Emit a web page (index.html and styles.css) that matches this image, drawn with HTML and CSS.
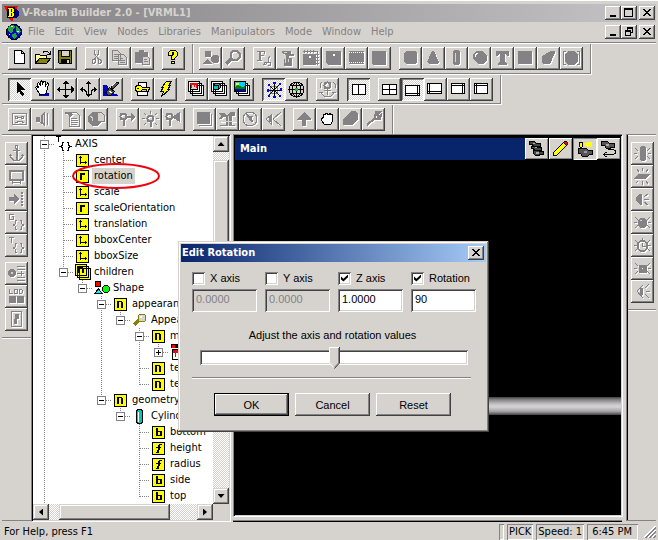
FILE: index.html
```html
<!DOCTYPE html>
<html lang="en">
<head>
<meta charset="utf-8">
<title>V-Realm Builder 2.0 - [VRML1]</title>
<link rel="stylesheet" href="styles.css">
</head>
<body>
<svg class="defs" width="0" height="0" aria-hidden="true">
  <symbol id="vec" viewBox="0 0 13 13"><path fill="#ff0" stroke="#000" d="M.5.5h12v12h-12z"/><path fill="#000" d="M4 2h1v8H4zM3 3h3v1H3zM4 8h7v1H4zM9 7h1v3H9z"/></symbol>
  <symbol id="rot" viewBox="0 0 13 13"><path fill="#ff0" stroke="#000" d="M.5.5h12v12h-12z"/><path fill="#000" d="M4 3h2v7H4zM6 3h3v2H6z"/></symbol>
  <symbol id="node" viewBox="0 0 13 13"><path fill="#ff0" stroke="#000" d="M.5.5h12v12h-12z"/><path fill="#000" d="M3 3h2v7H3zM5 3h3v1H5zM7 4h2v6H7z"/></symbol>
  <symbol id="bool" viewBox="0 0 13 13"><path fill="#ff0" stroke="#000" d="M.5.5h12v12h-12z"/><path fill="#000" fill-rule="evenodd" d="M4 2h2v3h3l1 1v3l-1 1H4zM6 6v3h2V6z"/></symbol>
  <symbol id="flt" viewBox="0 0 13 13"><path fill="#ff0" stroke="#000" d="M.5.5h12v12h-12z"/><path fill="#000" d="M7 2h3v1H8v2h1v1H8l-1 5H4v-1h1l1-4H4V5h2V3h1z"/></symbol>
  <symbol id="braces" viewBox="0 0 23 23"><path fill="none" stroke="currentColor" d="M12 9.500h-1.500v3l-2 1.500 2 1.500v3H12M15 9.500h1.500v3l2 1.500-2 1.500v3H15"/></symbol>
  <symbol id="rays" viewBox="0 0 23 23"><path fill="none" stroke="currentColor" d="M4 6l3 3M3 11.500h3M4 17l3-3M19 6l-3 3M20 11.500h-3M19 17l-3-3"/></symbol>
  <symbol id="cam" viewBox="0 0 23 23"><path fill="#555" stroke="#000" d="M5.500 8.500h8l2 2h4v4h-3l-2 2h-5l-2-3h-2z"/><path fill="#999" d="M11 11h3v2h-3z"/></symbol>
  <symbol id="min" viewBox="0 0 12 10"><path fill="#000" d="M3 7h6v2H3z"/></symbol>
  <symbol id="close" viewBox="0 0 12 10"><path fill="#000" d="M2 1h2v1h1v1h2V2h1V1h2v1H9v1H8v1H7v1h1v1h1v1h1v1H8V7H7V6H5v1H4v1H2V7h1V6h1V5h1V4H4V3H3V2H2z"/></symbol>
</svg>

<header class="titlebar">
  <svg class="app-icon" viewBox="0 0 16 15"><path fill="#f00" d="M0 0h14L7 13z"/><circle cx="11" cy="7.500" r="4.500" fill="#000084"/><path fill="#f00" d="M5 12h4v3H7z"/><path fill="#000" d="M3 1h8v10l-2 1H3z"/><path fill="#ff0" d="M4 2h5v1H4zM5 3h2v7H5zM8 3h2v3H8zM7 6h2v1H7zM8 7h2v3H8zM4 10h5v1H4z"/></svg>
  <h1>V-Realm Builder 2.0 - [VRML1]</h1>
  <div class="controls">
    <button class="ctl" aria-label="Minimize"><svg><use href="#min"/></svg></button><button class="ctl" aria-label="Maximize"><svg viewBox="0 0 12 10"><path fill="none" stroke="#000" d="M1.500 1.500h8v7h-8zM1 .5h9"/></svg></button><button class="ctl last" aria-label="Close"><svg><use href="#close"/></svg></button>
  </div>
</header>

<nav class="menubar">
  <svg class="globe" viewBox="0 0 16 16"><circle cx="8" cy="8" r="7.500" fill="#0000c8" stroke="#000"/><path fill="#21a642" d="M3 2l4-1 2 2-2 2v2L5 9 2 7V4zM10 2l3 2 2 4-3 2-2-3zM6 10l4-1 1 3-3 3-2-2z"/><path fill="#fff" d="M5 2h2v1H5zM11 7h2v1h-2zM3 10h1v1H3z"/></svg>
  <div class="menus"><button>File</button><button>Edit</button><button>View</button><button>Nodes</button><button>Libraries</button><button>Manipulators</button><button>Mode</button><button>Window</button><button>Help</button></div>
  <div class="controls">
    <button class="ctl" aria-label="Minimize document"><svg><use href="#min"/></svg></button><button class="ctl" aria-label="Restore document"><svg viewBox="0 0 12 10"><path fill="none" stroke="#000" d="M4 .5h6M4.500 3V1.500h5v4H8M2 3.500h6M2.500 4.500h5v4h-5z"/></svg></button><button class="ctl last" aria-label="Close document"><svg><use href="#close"/></svg></button>
  </div>
</nav>

<section class="toolbars">
  <div class="row first">
    <div class="band">
      <div class="group">
        <button class="tb" aria-label="New"><svg viewBox="0 0 23 23"><path fill="#fff" stroke="#000" d="M6.500 3.500h7l3 3v10h-10zM13.500 3.500v3h3"/></svg></button>
        <button class="tb" aria-label="Open"><svg viewBox="0 0 23 23"><path fill="#ffff9c" stroke="#000" d="M4.500 16.500v-9h4l1 1h6v3h-6z"/><path fill="#848200" stroke="#000" d="M4.500 16.500l4-5h11l-4 5z"/><path fill="none" stroke="#000" d="M12 5.500l2-1.500h2l3 3M19.500 3.500v4h-4"/></svg></button>
        <button class="tb" aria-label="Save"><svg viewBox="0 0 23 23"><path fill="#848200" stroke="#000" d="M4.500 3.500h13v13h-12l-1-1z"/><path fill="#d6d3ce" stroke="#000" d="M7.500 3.500h8v6h-8z"/><path d="M7 12h9v5H7z"/><path fill="#d6d3ce" d="M13 13h2v3h-2z"/></svg></button>
      </div>
      <div class="group">
        <button class="tb off" aria-label="Cut"><svg viewBox="0 0 23 23"><path fill="none" stroke="currentColor" d="M9.500 3v4l4 5M13.500 3v4l-4 5M8 12.500h2v3l-1 1H8l-1-1v-2zM13 12.500h2l1 1v2l-1 1h-2z"/></svg></button>
        <button class="tb off" aria-label="Copy"><svg viewBox="0 0 23 23"><path fill="#d6d3ce" stroke="currentColor" d="M4.500 3.500h5l3 3v7h-8zM6 7.500h4M6 9.500h5M6 11.500h4M10.500 7.500h5l3 3v7h-8zM12 11.500h3M12 13.500h5M12 15.500h5"/></svg></button>
        <button class="tb off" aria-label="Paste"><svg viewBox="0 0 23 23"><path fill="currentColor" d="M4 5h4V3h5v2h4v11H4z"/><path fill="#d6d3ce" stroke="currentColor" d="M11.500 9.500h5l2 2v6h-7zM13 12.500h3M13 14.500h4"/></svg></button>
      </div>
      <div class="group">
        <button class="tb" aria-label="Help"><svg viewBox="0 0 23 23"><path fill="#ff0" stroke="#000" d="M6.500 8.500v-3l2-2h5l2 2v3l-3 3v1h-3v-3l2-2v-2h-1v3zM9.500 14.500h3v2h-3z"/></svg></button>
      </div>
    </div>
    <div class="band">
      <div class="group">
        <button class="tb off" aria-label="Objects"><svg viewBox="0 0 23 23"><path fill="currentColor" d="M6 4h6v6H6zM14 8h4l2 2v4l-2 2h-4l-2-2v-4zM8 12l5 5H3z"/></svg></button>
        <button class="tb off" aria-label="Find"><svg viewBox="0 0 23 23"><path fill="none" stroke="currentColor" stroke-width="2" d="M11 4h4l3 3v3l-3 3h-4l-2-2V6z"/><path stroke="currentColor" stroke-width="3" d="M9 12l-5 5"/></svg></button>
      </div>
      <div class="group">
        <button class="tb off" aria-label="Font style"><svg viewBox="0 0 23 23"><path fill="currentColor" d="M4 4h8v3h-1V5H8v3h3v1H8v4h1v1H4v-1h2V5H4z"/><path fill="none" stroke="currentColor" d="M17 9l-2 3v3l-2 2h-2l1-2h5v3h-2"/></svg></button>
        <button class="tb off" aria-label="Material"><svg viewBox="0 0 23 23"><path fill="currentColor" d="M6 4h9v3h3v2h-5v2h3v8H8v-7h2V8L6 6z"/><path fill="#d6d3ce" d="M9 12h1v4H9zM12 12h1v3h-1zM8 5h3v1H8z"/></svg></button>
        <button class="tb off" aria-label="Texture grid"><svg viewBox="0 0 23 23"><path fill="currentColor" d="M4 7h13v11H4z"/><path stroke="currentColor" d="M4 4.500h15M18.500 4v14M5.500 3v3M8.500 3v3M11.500 3v3M14.500 3v3M17 7.500h3M17 10.500h3M17 13.500h3M17 16.500h3"/><path fill="#fff" d="M10 9h2v2h-2z"/></svg></button>
        <button class="tb off" aria-label="Image texture"><svg viewBox="0 0 23 23"><path fill="currentColor" d="M4 4h15v14H6l-2-2z"/><path fill="#fff" d="M11 7h2v2h-2z"/></svg></button>
        <button class="tb off" aria-label="Movie texture"><svg viewBox="0 0 23 23"><path fill="currentColor" d="M4 4h15v13H4z"/><path stroke="#fff" stroke-dasharray="1 1" d="M4 5.500h15M4 15.500h15"/></svg></button>
        <button class="tb off" aria-label="Pixel texture"><svg viewBox="0 0 23 23"><path fill="currentColor" d="M4 4h14v14H5l-1-1z"/></svg></button>
      </div>
      <div class="group">
        <button class="tb off" aria-label="Box"><svg viewBox="0 0 23 23"><path fill="currentColor" d="M7 4h9l2 2v9l-2 2H7l-2-2V6z"/></svg></button>
        <button class="tb off" aria-label="Cone"><svg viewBox="0 0 23 23"><path fill="currentColor" d="M10 4h2l5 11-2 2H8l-3-2z"/></svg></button>
        <button class="tb off" aria-label="Cylinder"><svg viewBox="0 0 23 23"><path fill="currentColor" d="M9 3h4l2 2v11l-2 2H9l-1-2V5z"/><path fill="#d6d3ce" d="M10 6h1v9h-1z"/></svg></button>
        <button class="tb off" aria-label="Sphere"><svg viewBox="0 0 23 23"><path fill="currentColor" d="M9 4h6l4 5v4l-4 4h-4l-6-5V7z"/><path fill="none" stroke="#fff" d="M7 10V8l3-2"/></svg></button>
        <button class="tb off" aria-label="Text"><svg viewBox="0 0 23 23"><path fill="currentColor" d="M5 4h13v5h-2l-1-2h-1v8l2 1v2H7v-2l2-1V7H8L7 9H5z"/></svg></button>
        <button class="tb off" aria-label="Elevation grid"><svg viewBox="0 0 23 23"><path fill="currentColor" d="M4 4h14v13H4z"/></svg></button>
        <button class="tb off" aria-label="Extrusion"><svg viewBox="0 0 23 23"><path fill="currentColor" d="M5 9l9-5h4v2l-5 11H6l-1-1z"/></svg></button>
        <button class="tb off" aria-label="Face set"><svg viewBox="0 0 23 23"><path fill="currentColor" d="M8 4h7l3 4v6l-3 4H8l-3-4V8z"/><path fill="none" stroke="currentColor" d="M6 4.500H3.500v13H6M17 4.500h2.500v13H17"/></svg></button>
      </div>
    </div>
  </div>

  <div class="row second">
    <div class="band">
      <div class="group">
        <button class="tb down" aria-label="Select"><svg viewBox="0 0 23 23"><path d="M9 4l8 8h-4l3 4-2 2-3-5-2 2z"/></svg></button>
        <button class="tb" aria-label="Hand"><svg viewBox="0 0 23 23"><path fill="#0000c8" d="M8 15h10v3H8z"/><path fill="#fff" stroke="#000" d="M4.500 9.500l1-1 2 1-1-4 1-1 2 3V4l1-1 1 1v3l1-4h2v5l2-3 1 1-1 5-2 5h-6z"/></svg></button>
        <button class="tb" aria-label="Move"><svg viewBox="0 0 23 23"><path fill="none" stroke="#000" d="M11.500 4v15M4 11.500h15"/><path d="M11 3h1l3 3H8zM11 20h1l3-3H8zM3 11v1l3 3V8zM20 11v1l-3 3V8z"/></svg></button>
        <button class="tb" aria-label="Orbit"><svg viewBox="0 0 23 23"><path fill="none" stroke="#000" d="M11.500 4v14M4 11.500h3l2 2v3M19 11.500h-3l-2 2v3"/><path d="M11 3h1l2 3H9zM11 19h1l2-3H9zM3 11v1l3 2V9zM20 11v1l-3 2V9z"/></svg></button>
        <button class="tb" aria-label="Paint"><svg viewBox="0 0 23 23"><path fill="#0000c8" d="M3 7h4l3 7 8 3v1H3z"/><path fill="#555" stroke="#000" d="M9.500 9.500l5 4-4 4H8l-2-3zM11 9l5-5h2v2l-5 5z"/><path stroke="#fff" d="M9 13l3 2M12 8l4-4"/></svg></button>
      </div>
      <div class="group">
        <button class="tb" aria-label="Key"><svg viewBox="0 0 23 23"><path fill="#fff" stroke="#000" d="M7.500 8.500v-4h8v4M6.500 13.500h10v4h-10z"/><path fill="#ff0" stroke="#000" d="M4.500 8.500l2-1h3l2 2h7v2h-1v2h-2v-2h-4l-2 2h-3l-2-1z"/><path d="M6 10h2v1H6z"/></svg></button>
        <button class="tb" aria-label="Run"><svg viewBox="0 0 23 23"><path fill="#ff0" stroke="#000" d="M12.500 3.500h5l-3 4h2l-3 4h2l-8 7 2-5h-3l3-4h-2z"/></svg></button>
      </div>
      <div class="group">
        <button class="tb" aria-label="Material library"><svg viewBox="0 0 23 23"><path fill="#fff" stroke="#000" d="M7.500 7.500h11v10h-11zM5.500 5.500h11v10h-11zM3.500 3.500h11v10h-11z"/><path fill="#d6d3ce" stroke="#000" d="M5.500 5.500h7v6h-7z"/><path fill="#f00" d="M5 5h8v2H5zM6 7h1v3H6zM9 7h1v2H9zM11 7h1v3h-1z"/></svg></button>
        <button class="tb" aria-label="Object library"><svg viewBox="0 0 23 23"><path fill="#fff" stroke="#000" d="M7.500 7.500h11v10h-11zM5.500 5.500h11v10h-11zM3.500 3.500h11v10h-11z"/><path fill="#00c3c6" stroke="#000" d="M5.500 7.500l2-2h5v4l-2 2h-5zM5.500 7.500h5v4M10.500 7.500l2-2"/></svg></button>
        <button class="tb" aria-label="Image library"><svg viewBox="0 0 23 23"><path fill="#fff" stroke="#000" d="M7.500 7.500h11v10h-11zM5.500 5.500h11v10h-11z"/><path fill="#00cfff" stroke="#000" d="M3.500 3.500h11v10h-11z"/><path fill="#008200" d="M4 9l3-2 4 2 3-1v4H4z"/><path fill="#0000c8" d="M4 11h10v2H4z"/><path fill="#ff0" d="M5 5h3v2H5z"/></svg></button>
      </div>
      <div class="group">
        <button class="tb down" aria-label="Axes"><svg viewBox="0 0 23 23"><circle cx="12" cy="12" r="4" fill="none" stroke="#848284"/><path stroke="#000" d="M6 6l12 12M18 6L6 18M12.500 5v14M5 12.500h14"/><path fill="#00f" d="M11 4h3v2h-3zM11 18h3v2h-3zM5 11h2v3H5zM18 10h2v3h-2zM6 6h2v2H6zM17 5h2v2h-2zM6 17h2v2H6zM17 17h2v2h-2z"/></svg></button>
        <button class="tb" aria-label="Globe"><svg viewBox="0 0 23 23"><circle cx="11.500" cy="11.500" r="7.500" fill="none" stroke="#000"/><ellipse cx="11.500" cy="11.500" rx="4" ry="7.500" fill="none" stroke="#000"/><path stroke="#000" d="M4 11.500h15M11.500 4v15M6 7.500h11M6 15.500h11"/><path fill="#0c0" d="M10 10h3v3h-3z"/></svg></button>
      </div>
      <div class="group">
        <button class="tb off" aria-label="Anchor rotate"><svg viewBox="0 0 23 23"><circle cx="11.500" cy="7.500" r="3" fill="none" stroke="currentColor" stroke-width="2"/><path fill="none" stroke="currentColor" d="M11.500 11v6M8 12.500h7M5 15l3 3h7l3-3M6 4l-2 2v4M17 4l2 2v4M3 14.500h4M16 14.500h4"/></svg></button>
      </div>
      <div class="group">
        <button class="tb down" aria-label="Split panes"><svg viewBox="0 0 23 23"><path fill="#fff" stroke="#000" d="M5.500 6.500h13v10h-13zM11.500 6.500v10"/></svg></button>
      </div>
      <div class="group">
        <button class="tb" aria-label="Four views"><svg viewBox="0 0 23 23"><path fill="#fff" stroke="#000" d="M4.500 6.500h14v10h-14zM11.500 6.500v10M4 11.500h15"/></svg></button>
        <button class="tb down" aria-label="Right and bottom view"><svg viewBox="0 0 23 23"><path fill="#fff" stroke="#000" d="M4.500 7.500h14v10h-14zM16.500 7.500v10M4 15.500h15"/></svg></button>
        <button class="tb" aria-label="Left and bottom view"><svg viewBox="0 0 23 23"><path fill="#fff" stroke="#000" d="M3.500 5.500h14v10h-14zM5.500 5.500v10M3 13.500h15"/></svg></button>
        <button class="tb" aria-label="Right and top view"><svg viewBox="0 0 23 23"><path fill="#fff" stroke="#000" d="M4.500 5.500h13v10h-13zM15.500 5.500v10M4 7.500h14"/></svg></button>
        <button class="tb" aria-label="Left and top view"><svg viewBox="0 0 23 23"><path fill="#fff" stroke="#000" d="M4.500 5.500h13v10h-13zM6.500 5.500v10M4 7.500h14"/></svg></button>
      </div>
    </div>
  </div>

  <div class="row third">
    <div class="band">
      <div class="group">
        <button class="tb off" aria-label="Audio clip"><svg viewBox="0 0 23 23"><path fill="none" stroke="currentColor" d="M4.500 5.500h14v11h-14z"/><path fill="none" stroke="currentColor" d="M7.500 8.500h2v2h-2zM13.500 8.500h2v2h-2zM9 9.500h5M7 14.500h2v-1h5v1h2"/></svg></button>
        <button class="tb off" aria-label="Sound"><svg viewBox="0 0 23 23"><path fill="currentColor" d="M5 9h3l6-5v14l-6-4H5z"/><path fill="none" stroke="#d6d3ce" d="M9.500 8v6M12.500 7v8"/><path fill="none" stroke="currentColor" d="M16.500 5v12"/></svg></button>
      </div>
      <div class="group">
        <button class="tb off" aria-label="Script"><svg viewBox="0 0 23 23"><path fill="none" stroke="currentColor" d="M7.500 8v10.500h10v-11l-3-3h-6M9 10.500h6M9 12.500h7M9 14.500h7M9 16.500h6"/><path fill="currentColor" d="M3 4h7l1 3-3 2-2-3H3z"/></svg></button>
        <button class="tb off" aria-label="Inline world"><svg viewBox="0 0 23 23"><circle cx="10" cy="11" r="7" fill="currentColor"/><path stroke="#d6d3ce" fill="none" d="M5 8l3 2-1 3"/><path fill="#d6d3ce" stroke="currentColor" d="M12.500 4.500h4l3 3v6h-7z"/></svg></button>
      </div>
      <div class="group">
        <button class="tb off" aria-label="Directional light"><svg viewBox="0 0 23 23"><circle cx="7.500" cy="8.500" r="3" fill="none" stroke="currentColor" stroke-width="2"/><path fill="currentColor" d="M7 12h2v6H7zM11 8h4V5l4 4-4 4v-3h-4z"/></svg></button>
        <button class="tb off" aria-label="Point light"><svg viewBox="0 0 23 23"><circle cx="11.500" cy="10.500" r="3" fill="none" stroke="currentColor" stroke-width="2"/><path fill="currentColor" d="M11 14h2v5h-2z"/><path stroke="currentColor" d="M11.500 3v3M5 5l2 2M18 5l-2 2M3 10.500h3M17 10.500h3M5 17l2-2M18 17l-2-2"/></svg></button>
        <button class="tb off" aria-label="Spot light"><svg viewBox="0 0 23 23"><circle cx="7.500" cy="8.500" r="3" fill="none" stroke="currentColor" stroke-width="2"/><path fill="currentColor" d="M7 12h2v6H7zM11 8l7-4v10l-7-4z"/></svg></button>
      </div>
      <div class="group">
        <button class="tb off" aria-label="Background"><svg viewBox="0 0 23 23"><path fill="currentColor" d="M4 4h13v12H4z"/><path fill="none" stroke="currentColor" d="M18.500 6v11.500H6"/></svg></button>
        <button class="tb off" aria-label="Fog"><svg viewBox="0 0 23 23"><path fill="currentColor" d="M3 5h5l3 2 4-3h4v4h-3v9h3v1H4v-1h6V9H8l-3 2H3l2-3z"/><path stroke="#d6d3ce" d="M4 13.500h16M12.500 8v10"/></svg></button>
        <button class="tb off" aria-label="Time sensor"><svg viewBox="0 0 23 23"><circle cx="11" cy="11" r="7" fill="none" stroke="currentColor"/><path fill="none" stroke="currentColor" stroke-width="2" d="M8 6l3 5 3 3M11 11l2-3"/></svg></button>
        <button class="tb off" aria-label="Visibility"><svg viewBox="0 0 23 23"><path fill="none" stroke="currentColor" d="M19 4l-8 7 8 7M4 11l5-4v9z"/><path fill="currentColor" d="M7 8h3v6H7z"/></svg></button>
      </div>
      <div class="group">
        <button class="tb off" aria-label="Up"><svg viewBox="0 0 23 23"><path fill="currentColor" d="M11 4l7 7v1h-5v6H9v-6H4v-1z"/></svg></button>
        <button class="tb" aria-label="Grab"><svg viewBox="0 0 23 23"><path fill="#fff" stroke="#000" d="M5.500 10.500l2-1v-3h2v-1h2v1h2v-1h1v1h2v7l-2 3h-6l-3-4z"/></svg></button>
        <button class="tb off" aria-label="Touch"><svg viewBox="0 0 23 23"><path fill="currentColor" d="M12 3h5l2 3v6l-6 5H4v-6z"/></svg></button>
        <button class="tb off" aria-label="Settings"><svg viewBox="0 0 23 23"><path fill="none" stroke="currentColor" stroke-width="2" d="M5 17l8-7M14 4l-1 5 1 2h4l1-4-3 2-1-2 3-3z"/></svg></button>
      </div>
    </div>
  </div>
</section>

<main class="work">
  <aside class="dock left">
    <div class="group">
      <button class="tb off" aria-label="Anchor"><svg viewBox="0 0 23 23"><path fill="none" stroke="currentColor" d="M10.500 3.500h2v3h-2zM8 8.500h7M5.500 12v3l3 3h6l3-3v-3M4 13.500h3M16 13.500h3"/><path fill="currentColor" d="M11 7h2v11h-2z"/></svg></button>
      <button class="tb off" aria-label="Billboard"><svg viewBox="0 0 23 23"><path fill="none" stroke="currentColor" stroke-width="2" d="M5 6h13v9H5z"/><path stroke="currentColor" d="M7.500 15v4M15.500 15v4M7 17.500h9"/></svg></button>
      <button class="tb off" aria-label="Collision"><svg viewBox="0 0 23 23"><path fill="currentColor" d="M4 9h5V6l5 5-5 5v-3H4z"/><path stroke="currentColor" stroke-width="2" stroke-dasharray="2 1" d="M17 4v14"/></svg></button>
      <button class="tb off" aria-label="Group"><svg viewBox="0 0 23 23"><path fill="none" stroke="currentColor" d="M9 3.500H5l-.5 1v4l.5 0h3.500v-3H7"/><use href="#braces"/></svg></button>
      <button class="tb off" aria-label="Transform"><svg viewBox="0 0 23 23"><path fill="none" stroke="currentColor" d="M4 3.500h5M6.500 3v6"/><use href="#braces"/></svg></button>
    </div>
    <div class="group">
      <button class="tb off" aria-label="Switch"><svg viewBox="0 0 23 23"><circle cx="7" cy="11" r="4" fill="currentColor"/><path stroke="currentColor" d="M12 4.500h8M12 7.500h8M12 11.500h7M12 15.500h8M12 18.500h8M16.500 9v5"/><path fill="#d6d3ce" d="M6 10h2v2H6z"/></svg></button>
      <button class="tb off" aria-label="LOD"><svg viewBox="0 0 23 23"><path fill="none" stroke="currentColor" d="M4.500 4v4.500h3M9.500 4.500h3v4h-3zM14.500 4.500h2l1 1v2l-1 1h-2z"/><path fill="currentColor" d="M4 11h7v7H4zM12 11h7v7h-7z"/></svg></button>
      <button class="tb off" aria-label="Proto"><svg viewBox="0 0 23 23"><path fill="none" stroke="currentColor" d="M6.500 3.500h10v15h-10z"/><path fill="currentColor" d="M10 6h4v5h-4zM9 11h3v5H9z"/></svg></button>
    </div>
  </aside>

  <section class="treepane">
    <div class="treeview">
      <ul class="tree">
        <li><div class="item"><span class="tw"><i class="minus"></i></span><span class="ic"><svg width="16" height="16" viewBox="0 0 16 16"><path fill="none" stroke="#000" d="M0 .5h5M2.500 0v6M8 6.500H6.500v3l-2 1 2 1v3H8M11 6.500h1.500v3l2 1-2 1v3H11"/></svg></span><span class="tx">AXIS</span></div>
          <ul>
            <li><div class="item"><span class="tw"></span><span class="ic"><svg><use href="#vec"/></svg></span><span class="tx">center</span></div></li>
            <li><div class="item"><span class="tw"></span><span class="ic"><svg><use href="#rot"/></svg></span><span class="tx sel">rotation</span><svg class="ring" viewBox="0 0 90 28"><ellipse cx="45" cy="14" rx="43" ry="12" fill="none" stroke="#f00010" stroke-width="2"/></svg></div></li>
            <li><div class="item"><span class="tw"></span><span class="ic"><svg><use href="#vec"/></svg></span><span class="tx">scale</span></div></li>
            <li><div class="item"><span class="tw"></span><span class="ic"><svg><use href="#rot"/></svg></span><span class="tx">scaleOrientation</span></div></li>
            <li><div class="item"><span class="tw"></span><span class="ic"><svg><use href="#vec"/></svg></span><span class="tx">translation</span></div></li>
            <li><div class="item"><span class="tw"></span><span class="ic"><svg><use href="#vec"/></svg></span><span class="tx">bboxCenter</span></div></li>
            <li><div class="item"><span class="tw"></span><span class="ic"><svg><use href="#vec"/></svg></span><span class="tx">bboxSize</span></div></li>
            <li><div class="item"><span class="tw"><i class="minus"></i></span><span class="ic"><svg width="16" height="16" viewBox="0 0 16 16"><path fill="#ff0" stroke="#000" d="M4.500 4.500h11v11h-11zM2.500 2.500h11v11h-11zM.5.5h11v11H.5z"/><path d="M3 3h2v6H3zM5 3h3v1H5zM7 4h2v5H7z"/></svg></span><span class="tx">children</span></div>
              <ul>
                <li><div class="item"><span class="tw"><i class="minus"></i></span><span class="ic"><svg width="16" height="14" viewBox="0 0 16 14"><path fill="#f00" stroke="#000" d="M1.500.5h5v5h-5z"/><path fill="#0ff" stroke="#000" d="M4.500 8l4 4.500h-8z"/><circle cx="12" cy="8" r="3.500" fill="#0f0" stroke="#000"/></svg></span><span class="tx">Shape</span></div>
                  <ul>
                    <li><div class="item"><span class="tw"><i class="minus"></i></span><span class="ic"><svg><use href="#node"/></svg></span><span class="tx">appearance</span></div>
                      <ul>
                        <li><div class="item"><span class="tw"><i class="minus"></i></span><span class="ic"><svg width="14" height="14" viewBox="0 0 14 14"><path stroke="#848200" stroke-width="3" d="M6 7l-5 5"/><circle cx="9" cy="5" r="4" fill="#d6d3ce" stroke="#848200"/><path fill="#fff" d="M7 3h2v2H7z"/></svg></span><span class="tx">Appearance</span></div>
                          <ul>
                            <li><div class="item"><span class="tw"><i class="minus"></i></span><span class="ic"><svg><use href="#node"/></svg></span><span class="tx">mat</span></div>
                              <ul>
                                <li><div class="item"><span class="tw"><i class="plus"></i></span><span class="ic"><svg width="14" height="16" viewBox="0 0 14 16"><path d="M0 0h14v4H0z"/><path fill="#f00" d="M1 1h3v3H1z"/><path fill="#fff" stroke="#000" d="M1.500 5.500h11v10h-11z"/><path fill="#f00" d="M2 6h10v3H2zM4 9h1v4H4zM7 9h1v4H7z"/></svg></span></div></li>
                              </ul>
                            </li>
                            <li><div class="item"><span class="tw"></span><span class="ic"><svg><use href="#node"/></svg></span><span class="tx">tex</span></div></li>
                            <li><div class="item"><span class="tw"></span><span class="ic"><svg><use href="#node"/></svg></span><span class="tx">tex</span></div></li>
                          </ul>
                        </li>
                      </ul>
                    </li>
                    <li><div class="item"><span class="tw"><i class="minus"></i></span><span class="ic"><svg><use href="#node"/></svg></span><span class="tx">geometry</span></div>
                      <ul>
                        <li><div class="item"><span class="tw"><i class="minus"></i></span><span class="ic"><svg width="8" height="15" viewBox="0 0 8 15"><path fill="#00c3c6" stroke="#000" d="M2 .5h3l1.500 1.500v11L5 14.500H2L.5 13V2z"/><path fill="#fff" d="M2 3h1v10H2z"/></svg></span><span class="tx">Cylinder</span></div>
                          <ul>
                            <li><div class="item"><span class="tw"></span><span class="ic"><svg><use href="#bool"/></svg></span><span class="tx">bottom</span></div></li>
                            <li><div class="item"><span class="tw"></span><span class="ic"><svg><use href="#flt"/></svg></span><span class="tx">height</span></div></li>
                            <li><div class="item"><span class="tw"></span><span class="ic"><svg><use href="#flt"/></svg></span><span class="tx">radius</span></div></li>
                            <li><div class="item"><span class="tw"></span><span class="ic"><svg><use href="#bool"/></svg></span><span class="tx">side</span></div></li>
                            <li><div class="item"><span class="tw"></span><span class="ic"><svg><use href="#bool"/></svg></span><span class="tx">top</span></div></li>
                          </ul>
                        </li>
                      </ul>
                    </li>
                  </ul>
                </li>
              </ul>
            </li>
          </ul>
        </li>
        <li class="more"></li>
      </ul>
      <div class="vscroll"><button class="sb" aria-label="Scroll up"><i class="arr up"></i></button><div class="vthumb"></div><button class="sb bottom" aria-label="Scroll down"><i class="arr dn"></i></button></div>
    </div>
    <div class="hscroll"><button class="sb" aria-label="Scroll left"><i class="arr lt"></i></button><div class="hthumb"></div><button class="sb right" aria-label="Scroll right"><i class="arr rt"></i></button><span class="corner"></span></div>
  </section>

  <section class="viewcol">
    <div class="view">
      <div class="caption"><h2>Main</h2>
        <div class="capbtns">
          <button aria-label="Viewpoints"><svg viewBox="0 0 23 22"><path fill="#444" stroke="#000" d="M4.500 3.500h5l2 2h4v3h-7l-1-2h-3zM6.500 8.500h5l2 1h3v3h-7l-1-2h-2zM8.500 12.500h5l1 1h4v3h-3l-2 1h-3l-2-2z"/><path fill="#aaa" d="M8 5h2v1H8zM10 9h2v1h-2zM11 14h3v2h-3z"/></svg></button>
          <button aria-label="Edit view"><svg viewBox="0 0 23 22"><path fill="#ff0" stroke="#000" d="M4.500 17.500v-3l10-10 3 3-10 10z"/><path fill="#f00" stroke="#000" d="M14.500 4.500l1-1h2l1 1v2l-1 1z"/></svg></button>
          <button class="on" aria-label="Headlight"><svg viewBox="0 0 23 22"><path fill="#ff0" stroke="#000" d="M6.500 4.500h3v4l-1 1v3h-1v-3l-1-1z"/><path fill="#ff0" d="M10 6l5-2h4v5h-4z"/><use href="#cam" y="2" width="23" height="23"/></svg></button>
          <button aria-label="Reset view"><svg viewBox="0 0 23 22"><path fill="#555" stroke="#000" d="M4.500 3.500h6l2 2h5v4h-3l-2 1h-3l-2-3h-3z"/><path fill="#aaa" d="M9 6h3v2H9z"/><path fill="none" stroke="#000" d="M7 16.500h9l2-1v-3l-2-1h-5M9.500 14l-3 2.500 3 2.500"/></svg></button>
        </div>
      </div>
      <div class="scene"></div>
    </div>
    <div class="edge"></div>
  </section>

  <aside class="dock rightdock">
    <div class="group">
      <button class="tb off" aria-label="Cylinder sensor"><svg viewBox="0 0 23 23"><path fill="currentColor" d="M10 4h3l2 2v11l-2 2h-3l-1-2V6z"/><use href="#rays"/></svg></button>
      <button class="tb off" aria-label="Plane sensor"><svg viewBox="0 0 23 23"><path fill="currentColor" d="M7 9h12l-4 5H3z"/><path stroke="currentColor" d="M11.500 3v3M6 4l2 3M17 4l-2 3M11.500 16v4M7 16l-2 2M15 16l2 3"/></svg></button>
      <button class="tb off" aria-label="Proximity sensor"><svg viewBox="0 0 23 23"><path fill="currentColor" d="M11 6v11H9l-4-4V9l4-3z"/><path stroke="currentColor" d="M13 9l4-3M13 11.500h5M13 14l4 3"/></svg></button>
      <button class="tb off" aria-label="Sphere sensor"><svg viewBox="0 0 23 23"><circle cx="11.500" cy="12" r="5" fill="currentColor"/><path fill="#d6d3ce" d="M9 9h2v1H9z"/><use href="#rays"/></svg></button>
      <button class="tb off" aria-label="Timer"><svg viewBox="0 0 23 23"><circle cx="11.500" cy="12" r="5" fill="none" stroke="currentColor" stroke-width="2"/><path fill="none" stroke="currentColor" d="M11.500 4v3M11.500 9v3h3"/><use href="#rays"/></svg></button>
      <button class="tb off" aria-label="Touch sensor"><svg viewBox="0 0 23 23"><path fill="currentColor" d="M8 8h8v8H8z"/><path fill="#fff" d="M11 11h1v1h-1z"/><use href="#rays"/></svg></button>
      <button class="tb off" aria-label="Visibility sensor"><svg viewBox="0 0 23 23"><path fill="none" stroke="currentColor" d="M12 5l-6 6 6 7"/><path fill="currentColor" d="M9 8h3v7H9z"/><path stroke="currentColor" d="M14 8l4-4M15 11.500h4M14 14l4 4"/></svg></button>
    </div>
  </aside>
</main>

<footer class="status">
  <span class="help">For Help, press F1</span>
  <span class="pane tiny"></span><span class="pane">PICK</span><span class="pane">Speed: 1</span><span class="pane time">6:45 PM</span>
  <svg class="grip" viewBox="0 0 12 12"><path stroke="#848284" stroke-width="2" d="M1 12L12 1M5 12l7-7M9 12l3-3"/><path stroke="#fff" d="M0 11.500L11.500 0M4 11.500L11.500 4M8 11.500L11.500 8"/></svg>
</footer>

<form class="dialog" role="dialog" aria-labelledby="dlg-title">
  <div class="dlg-title"><h2 id="dlg-title">Edit Rotation</h2><button type="button" class="ctl" aria-label="Close dialog"><svg><use href="#close"/></svg></button></div>
  <div class="dlg-body">
    <div class="fields">
      <div class="field"><label><input type="checkbox">X axis</label><input type="text" aria-label="X value" value="0.0000" disabled></div>
      <div class="field"><label><input type="checkbox">Y axis</label><input type="text" aria-label="Y value" value="0.0000" disabled></div>
      <div class="field"><label><input type="checkbox" checked>Z axis</label><input type="text" aria-label="Z value" value="1.0000"></div>
      <div class="field"><label><input type="checkbox" checked>Rotation</label><input type="text" aria-label="Rotation value" value="90"></div>
    </div>
    <label class="hint" for="amount">Adjust the axis and rotation values</label>
    <input type="range" id="amount" min="0" max="100" value="50">
    <hr>
    <div class="actions"><button type="button" class="push default">OK</button><button type="button" class="push">Cancel</button><button type="button" class="push">Reset</button></div>
  </div>
</form>
</body>
</html>
```
FILE: styles.css
```css
:root {
  --face: #d6d3ce;
  --gray: #848284;
  --dark: #424142;
  --navy: #08246b;
  --dither: repeating-conic-gradient(#fff 0 25%, var(--face) 0 50%) 0 0 / 2px 2px;
}

* { box-sizing: border-box; }

body {
  margin: 0;
  min-height: 100vh;
  display: flex;
  flex-direction: column;
  position: relative;
  padding: 4px 2px 0;
  background: var(--face);
  box-shadow: inset 0 2px 0 -1px #fff;
  color: #000;
  font: 11px/16px "DejaVu Sans Condensed", "DejaVu Sans", sans-serif;
}

button, input { font: inherit; color: inherit; }
button { margin: 0; padding: 0; border: 0; background: var(--face); }
h1, h2 { margin: 0; font-size: 11px; font-weight: bold; }
svg { display: block; shape-rendering: crispEdges; }
.defs { position: absolute; }

/* Title and menu */
.titlebar {
  display: flex;
  align-items: center;
  height: 18px;
  padding: 0 1px 0 2px;
  background: linear-gradient(to right, #848284, #c6c3c6);
  color: var(--face);
}
.titlebar h1 { flex: 1; padding-left: 2px; white-space: nowrap; }
.app-icon { width: 16px; height: 15px; }
.controls { display: flex; }
.ctl {
  display: grid;
  place-items: center;
  width: 16px;
  height: 14px;
  box-shadow: inset -1px -1px var(--dark), inset 1px 1px #fff, inset -2px -2px var(--gray);
}
.ctl svg { width: 12px; height: 10px; }
.ctl.last { margin-left: 2px; }
.menubar {
  display: flex;
  align-items: center;
  height: 20px;
  padding: 0 1px 0 4px;
  color: var(--gray);
}
.globe { width: 16px; height: 16px; }
.menus { flex: 1; display: flex; gap: 10px; padding-left: 6px; }

/* Toolbars */
.row { display: flex; }
.row.first { border-top: 1px solid var(--gray); box-shadow: inset 0 1px #fff; padding-top: 1px; }
.band {
  display: flex;
  gap: 8px;
  padding: 3px 7px 3px 6px;
  border-right: 1px solid var(--gray);
  border-bottom: 1px solid var(--gray);
  box-shadow: 1px 1px #fff;
  margin-bottom: 1px;
}
.band + .band { padding-left: 6px; }
.row.second .band { padding-bottom: 2px; }
.row.third .band { border-bottom: 0; box-shadow: 1px 0 #fff; margin: 0; padding-bottom: 3px; }
.row .group { display: flex; }
.tb {
  width: 23px;
  height: 23px;
  box-shadow: inset -1px -1px var(--dark), inset 1px 1px #fff, inset -2px -2px var(--gray);
}
.tb svg { width: 23px; height: 23px; }
.tb.off { color: var(--gray); }
.tb.off > svg { filter: drop-shadow(1px 1px 0 #fff); }
.tb.down {
  background: var(--dither);
  box-shadow: inset 1px 1px var(--dark), inset -1px -1px #fff, inset 2px 2px var(--gray);
}

/* Work area */
.work {
  flex: 1;
  display: grid;
  grid-template-columns: 29px 200px 1fr 30px;
}
.dock {
  border-top: 1px solid var(--gray);
  border-bottom: 1px solid var(--gray);
  box-shadow: inset 0 1px #fff;
  margin-bottom: 1px;
}
.dock .group { display: flex; flex-direction: column; }
.left { padding: 7px 0 0 3px; }
.left .group + .group { margin-top: 5px; }
.left::after, .rightdock::after {
  content: "";
  display: block;
  height: 2px;
  margin: 6px 0 0 -3px;
  background: linear-gradient(var(--gray) 50%, #fff 50%);
}
.rightdock {
  padding: 7px 0 0 4px;
  border-left: 1px solid var(--gray);
  box-shadow: inset 1px 0 #000, inset 0 1px #fff;
}
.treepane {
  border: 1px solid;
  border-color: var(--gray) #fff #fff var(--gray);
  box-shadow: inset 1px 1px #000, inset -1px -1px var(--face);
  padding: 1px;
  display: flex;
  flex-direction: column;
  min-width: 0;
}
.treeview { flex: 1; display: flex; min-height: 0; }
.tree { flex: 1; min-width: 0; overflow: hidden; background: #fff; padding-left: 2px; }
ul { list-style: none; margin: 0; padding: 0; }
.tree ul { padding-left: 19px; }
.tree li { position: relative; }
.tree li::before {
  content: "";
  position: absolute;
  left: 9px;
  top: 0;
  bottom: 0;
  width: 1px;
  background: repeating-linear-gradient(var(--gray) 0 1px, #fff 1px 2px);
}
.tree li:last-child::before { bottom: auto; height: 9px; }
.item { display: flex; height: 16px; align-items: center; white-space: nowrap; position: relative; }
.tw {
  width: 19px;
  height: 16px;
  flex: none;
  display: grid;
  place-items: center;
  background: repeating-linear-gradient(to right, var(--gray) 0 1px, #fff 1px 2px) 10px 8px / 9px 1px no-repeat;
}
.tw i {
  position: relative;
  width: 9px;
  height: 9px;
  border: 1px solid var(--gray);
  background: linear-gradient(#000, #000) 1px 3px / 5px 1px no-repeat #fff;
}
.tw .plus {
  background: linear-gradient(#000, #000) 1px 3px / 5px 1px no-repeat, linear-gradient(#000, #000) 3px 1px / 1px 5px no-repeat #fff;
}
.ic { width: 19px; height: 16px; flex: none; display: grid; place-items: center; }
.ic svg:not([width]) { width: 13px; height: 13px; }
.tx { padding: 0 2px; line-height: 16px; }
.sel { background: var(--face); }
.ring {
  position: absolute;
  left: 17px;
  top: -6px;
  width: 90px;
  height: 28px;
  z-index: 1;
  shape-rendering: auto;
}

/* Scroll bars */
.vscroll { width: 16px; flex: none; display: flex; flex-direction: column; background: var(--dither); }
.vthumb { height: 200px; margin-top: 8px; }
.hscroll { display: flex; height: 16px; background: var(--dither); }
.hthumb { width: 111px; margin-left: 10px; }
.vthumb, .hthumb, .sb {
  background: var(--face);
  box-shadow: inset -1px -1px var(--dark), inset 1px 1px var(--face), inset -2px -2px var(--gray), inset 2px 2px #fff;
}
.sb { width: 16px; height: 16px; display: grid; place-items: center; }
.sb.bottom { margin-top: auto; }
.sb.right { margin-left: auto; }
.corner { width: 16px; background: var(--face); }
.arr { width: 7px; height: 4px; background: #000; }
.up { clip-path: polygon(50% 0, 100% 100%, 0 100%); }
.dn { clip-path: polygon(0 0, 100% 0, 50% 100%); }
.lt, .rt { width: 4px; height: 7px; }
.lt { clip-path: polygon(100% 0, 100% 100%, 0 50%); }
.rt { clip-path: polygon(0 0, 100% 50%, 0 100%); }

/* 3D view */
.viewcol { display: flex; flex-direction: column; padding: 0 3px 0 2px; min-width: 0; }
.view {
  flex: 1;
  display: flex;
  flex-direction: column;
  border: 1px solid;
  border-color: var(--gray) #fff #fff var(--gray);
  box-shadow: inset 1px 1px #000, inset -1px -1px var(--face);
  padding: 3px 1px 1px;
  background: #000;
}
.caption { display: flex; height: 22px; background: var(--navy); color: #fff; align-items: center; }
.caption h2 { flex: 1; padding-left: 5px; }
.capbtns { display: flex; }
.capbtns button {
  width: 24px;
  height: 22px;
  box-shadow: inset -1px -1px #000, inset 1px 1px #fff, inset -2px -2px var(--gray);
}
.capbtns .on { box-shadow: inset 1px 1px var(--gray), inset -1px -1px #fff; }
.capbtns svg { width: 23px; height: 22px; }
.scene {
  flex: 1;
  background: linear-gradient(#424142, #848284 15%, #c6c3c6 40%, #d6d3d6 55%, #a5a2a5 80%, #424142) 0 237px / 100% 18px no-repeat #000;
}
.edge { height: 2px; margin: 3px 1px 0 0; background: linear-gradient(var(--gray) 50%, #000 50%); }

/* Status bar */
.status { display: flex; align-items: center; height: 18px; padding: 2px 0 0 2px; gap: 3px; }
.help { flex: 1; line-height: 16px; }
.pane {
  height: 16px;
  padding: 0 2px;
  line-height: 16px;
  white-space: nowrap;
  box-shadow: inset 1px 1px var(--gray), inset -1px -1px #fff;
}
.tiny { width: 5px; }
.time { padding: 0 6px 0 5px; }
.grip { width: 12px; height: 12px; margin-left: 3px; }

/* Dialog */
.dialog {
  position: absolute;
  left: 178px;
  top: 241px;
  width: 311px;
  padding: 3px;
  background: var(--face);
  box-shadow: inset -1px -1px var(--dark), inset 1px 1px var(--face), inset -2px -2px var(--gray), inset 2px 2px #fff;
  font-family: "Liberation Sans", Arial, sans-serif;
  z-index: 2;
}
.dlg-title {
  display: flex;
  align-items: center;
  height: 18px;
  padding: 0 2px 0 1px;
  background: linear-gradient(to right, var(--navy), #a5cbf7);
  color: #fff;
}
.dlg-title h2 { flex: 1; font-family: "DejaVu Sans Condensed", "DejaVu Sans", sans-serif; }
.dlg-title .ctl { color: #000; }
.dlg-body { padding: 8px 11px 13px; }
.fields { display: flex; gap: 8px; }
.field { width: 65px; }
.field label { display: flex; align-items: center; gap: 5px; height: 16px; white-space: nowrap; }
input[type="checkbox"] {
  appearance: none;
  flex: none;
  width: 13px;
  height: 13px;
  margin: 0;
  background: #fff;
  box-shadow: inset 1px 1px var(--gray), inset -1px -1px #fff, inset 2px 2px var(--dark), inset -2px -2px var(--face);
}
input[type="checkbox"]:checked::before {
  content: "";
  display: block;
  width: 7px;
  height: 7px;
  margin: 3px;
  background: #000;
  clip-path: polygon(0 30%, 35% 60%, 100% 0, 100% 40%, 35% 100%, 0 70%);
}
input[type="text"] {
  display: block;
  width: 65px;
  height: 23px;
  margin-top: 3px;
  padding: 0 4px 4px;
  border: 0;
  border-radius: 0;
  background: #fff;
  box-shadow: inset 1px 1px var(--gray), inset -1px -1px #fff, inset 2px 2px var(--dark), inset -2px -2px var(--face);
}
input[type="text"]:disabled { background: var(--face); color: var(--gray); }
.hint { display: block; margin-top: 15px; padding-right: 2px; text-align: center; }
input[type="range"] {
  appearance: none;
  display: block;
  width: calc(100% - 15px);
  height: 23px;
  margin: 3px 0 0 8px;
  background: none;
}
input[type="range"]::-webkit-slider-runnable-track {
  height: 15px;
  background: #fff;
  box-shadow: inset 1px 1px var(--gray), inset -1px -1px #fff, inset 2px 2px var(--dark), inset -2px -2px var(--face);
}
input[type="range"]::-webkit-slider-thumb {
  appearance: none;
  width: 11px;
  height: 22px;
  margin-top: -3px;
  border: 0;
  border-radius: 0;
  background: url("data:image/svg+xml,%3Csvg xmlns='http://www.w3.org/2000/svg' width='11' height='22' viewBox='0 0 11 22'%3E%3Cpath fill='%23d6d3ce' d='M0 0h11v16l-5 6H5l-5-6z'/%3E%3Cpath fill='none' stroke='%23fff' d='M10 .5H.5V16L5 21'/%3E%3Cpath fill='none' stroke='%23848284' d='M9.500 1v15L5 20.500'/%3E%3Cpath fill='none' stroke='%23424142' d='M10.500 0v16L5.500 21.500'/%3E%3C/svg%3E") no-repeat;
}
hr { height: 2px; margin: 8px 4px 0 0; border: 0; background: linear-gradient(var(--gray) 50%, #fff 50%); }
.actions { display: flex; justify-content: center; gap: 6px; margin: 14px 0 0; padding-right: 2px; }
.push {
  width: 75px;
  height: 23px;
  box-shadow: inset -1px -1px var(--dark), inset 1px 1px #fff, inset -2px -2px var(--gray);
}
.push.default { box-shadow: inset 0 0 0 1px #000, inset -2px -2px var(--dark), inset 2px 2px #fff, inset -3px -3px var(--gray); }
```
